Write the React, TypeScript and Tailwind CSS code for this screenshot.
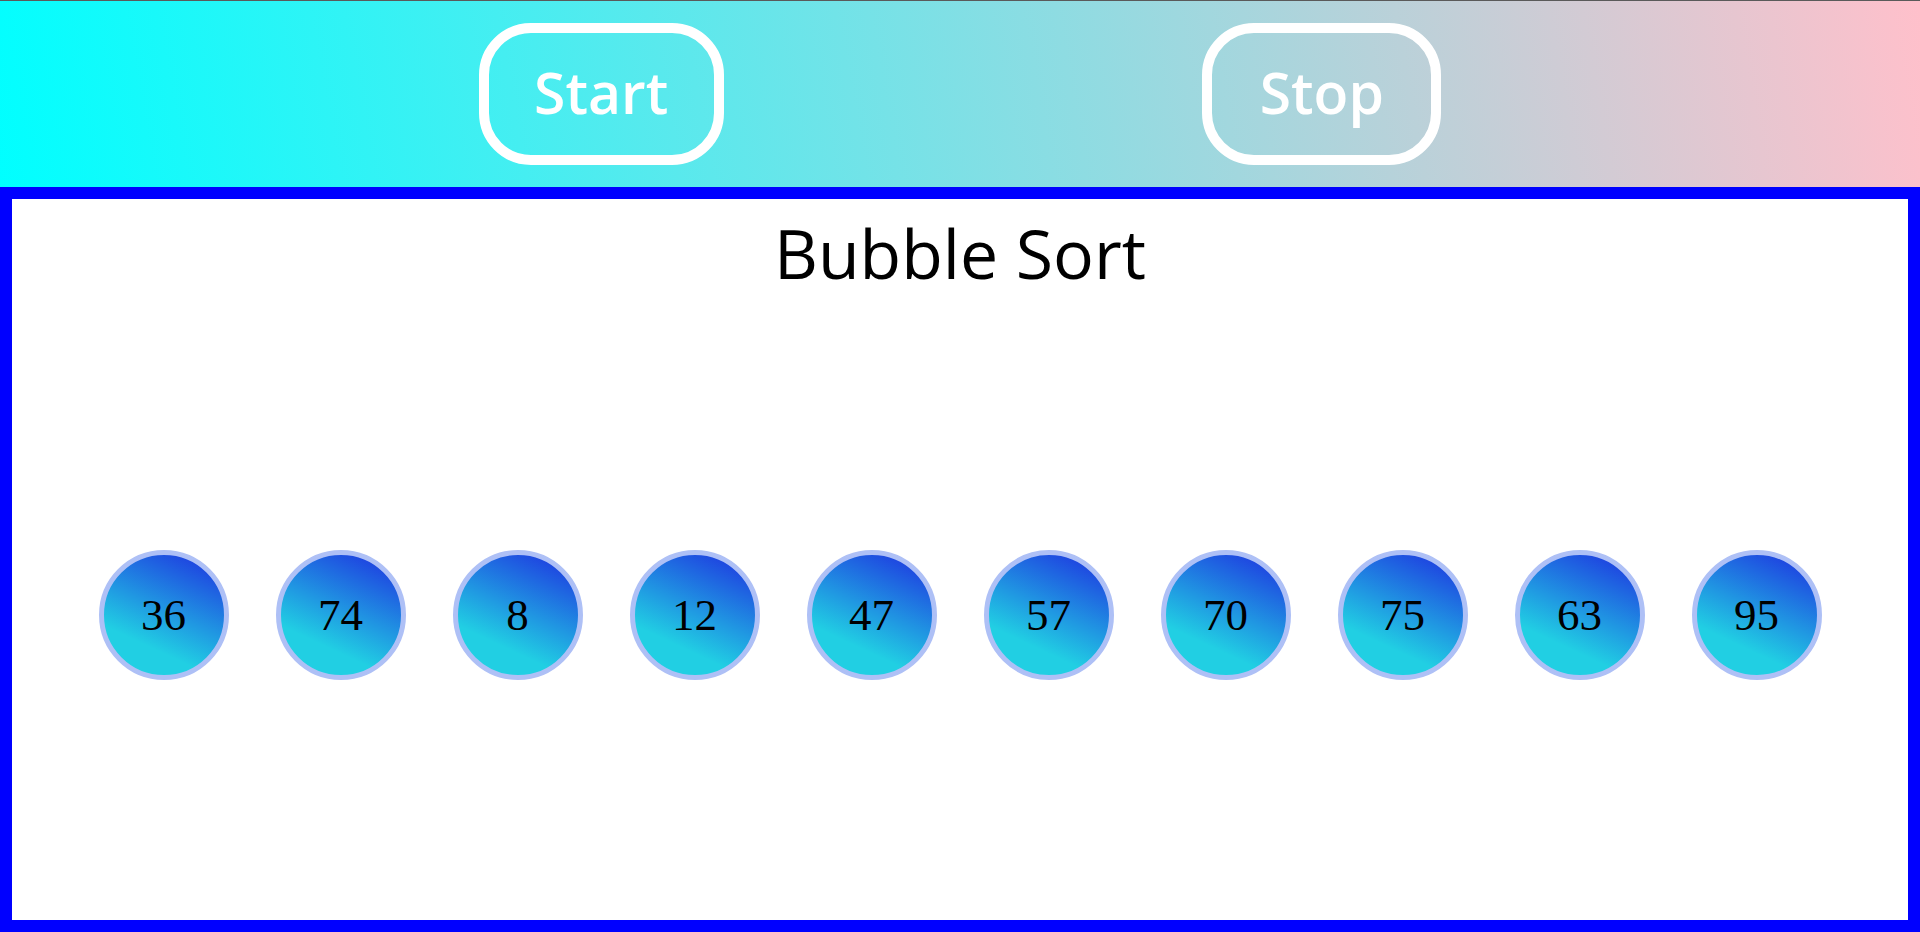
const values = [36, 74, 8, 12, 47, 57, 70, 75, 63, 95];

const Bubble = ({ value }: { value: number }) => {
    return (
        <div className="flex items-center justify-center w-[130px] h-[130px] rounded-full border-[5px] border-[#aec0f6] bg-[linear-gradient(205deg,#1e2ee0_0%,#21cfe3_72%)]">
            <span className="text-[45px] text-black font-['Liberation_Serif',serif] leading-none">{value}</span>
        </div>
    );
};

const App = () => {
    return (
        <div className="flex flex-col h-[932px] w-full font-['Open_Sans',sans-serif]">
            <div className="flex justify-evenly items-center h-[187px] border-t border-[#5a5a5a] bg-[linear-gradient(80deg,#00ffff,#ffc0cb)]">
                <button className="w-[245px] h-[142px] rounded-[52px] border-[10px] border-white text-white text-[57px] font-semibold leading-none pb-[4px]">
                    Start
                </button>
                <button className="w-[239px] h-[142px] rounded-[52px] border-[10px] border-white text-white text-[57px] font-semibold leading-none pb-[4px]">
                    Stop
                </button>
            </div>
            <div className="flex flex-col flex-1 border-[12px] border-[#0000ff] bg-white">
                <h1 className="h-[111px] pt-[20px] text-center text-[68px] leading-none text-black font-normal">
                    Bubble Sort
                </h1>
                <div className="flex flex-1 items-center justify-center gap-[47px]">
                    {values.map((v, i) => (
                        <Bubble key={i} value={v} />
                    ))}
                </div>
            </div>
        </div>
    );
};

export default App;
